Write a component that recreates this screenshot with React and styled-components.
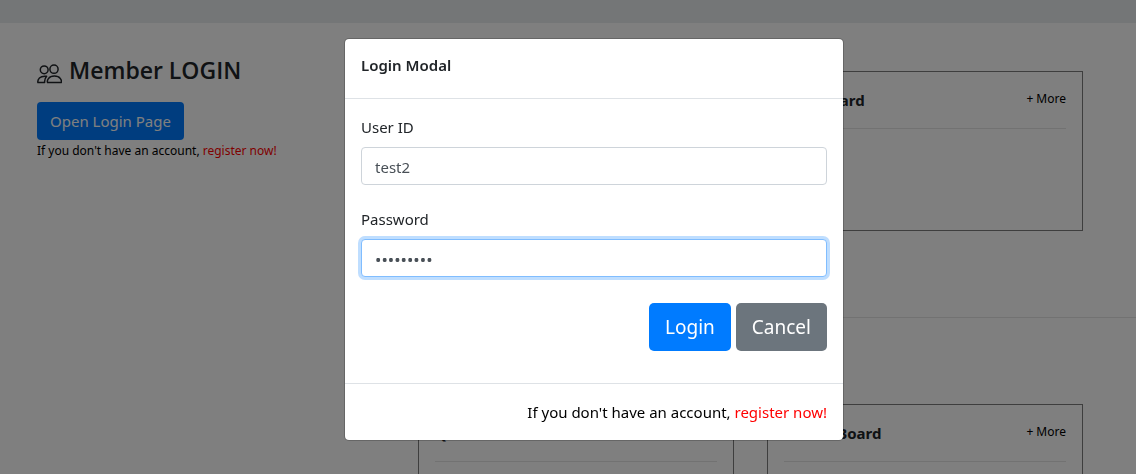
import React, { useState } from "react";
import styled, { createGlobalStyle } from "styled-components";

const GlobalStyle = createGlobalStyle`
  *, *::before, *::after { box-sizing: border-box; }
  body {
    margin: 0;
    overflow: hidden;
    background: #fff;
    color: #212529;
    font: 400 15px/24px "Noto Sans", "Open Sans", sans-serif;
  }
  button, input { font-family: inherit; margin: 0; }
`;

const TopBar = styled.header`
  height: 23px;
  background: #e9ecef;
`;

const Page = styled.main`
  display: flex;
`;

const Member = styled.aside`
  flex: 0 0 381px;
  margin-left: 37px;
  padding-top: 32px;
`;

const MemberTitle = styled.h4`
  display: flex;
  align-items: center;
  gap: 7px;
  margin: 0 0 17px;
  font-family: "Open Sans", sans-serif;
  font-size: 23px;
  line-height: 30px;
  font-weight: 600;
  svg { margin-top: 8px; }
`;

const Button = styled.button`
  border: 0;
  border-radius: ${(p) => (p.$large ? 5 : 4)}px;
  padding: ${(p) => (p.$large ? "0 16px" : "0 13px")};
  height: ${(p) => (p.$large ? 48 : 38)}px;
  font-size: ${(p) => (p.$large ? 19 : 15)}px;
  line-height: 24px;
  color: #fff;
  background: ${(p) => (p.$secondary ? "#6c757d" : "#007bff")};
`;

const Hint = styled.p`
  margin: 0;
  color: #000;
  font-size: ${(p) => (p.$small ? 12 : 15)}px;
  line-height: ${(p) => (p.$small ? 22 : 24)}px;
  a { color: #f00; text-decoration: none; }
`;

const Boards = styled.section`
  flex: 1;
  padding-top: 48px;
`;

const BoardRow = styled.div`
  display: grid;
  grid-template-columns: 1fr 1fr;
  gap: 33px;
  margin-right: 53px;
`;

const Rule = styled.hr`
  border: 0;
  border-top: 1px solid rgba(0, 0, 0, 0.1);
  margin: 86px 0;
`;

const Card = styled.article`
  height: 160px;
  padding: 16px 16px 0;
  border: 1px solid #7c7c7c;
`;

const CardHead = styled.div`
  display: flex;
  justify-content: space-between;
  height: 41px;
  border-bottom: 1px solid rgba(0, 0, 0, 0.1);
`;

const CardTitle = styled.h6`
  margin: 0;
  font-size: 15px;
  line-height: 24px;
  font-weight: 700;
`;

const More = styled.a`
  color: #000;
  font-size: 12px;
  line-height: 22px;
  text-decoration: none;
`;

const Backdrop = styled.div`
  position: fixed;
  inset: 0;
  display: flex;
  justify-content: center;
  align-items: flex-start;
  padding: 38px 0 0 52px;
  background: rgba(0, 0, 0, 0.5);
`;

const Dialog = styled.div`
  width: 100%;
  max-width: 500px;
  background: #fff;
  background-clip: padding-box;
  border: 1px solid rgba(0, 0, 0, 0.2);
  border-radius: 5px;
`;

const DialogHead = styled.div`
  padding: 14px 16px 21px;
  border-bottom: 1px solid #dee2e6;
`;

const DialogTitle = styled.h5`
  margin: 0;
  font-size: 15px;
  line-height: 24px;
  font-weight: 600;
`;

const DialogBody = styled.form`
  padding: 16px 16px 32px;
`;

const Field = styled.div`
  margin-bottom: ${(p) => (p.$last ? 26 : 22)}px;
`;

const Label = styled.label`
  display: block;
  margin-bottom: 8px;
`;

const Input = styled.input`
  display: block;
  width: 100%;
  height: 38px;
  padding: 2px 13px 0;
  border: 1px solid ${(p) => (p.$active ? "#80bdff" : "#ced4da")};
  border-radius: 4px;
  outline: 0;
  box-shadow: ${(p) => (p.$active ? "0 0 0 3px rgba(0, 123, 255, 0.25)" : "none")};
  color: #495057;
  background: #fff;
  font-size: ${(p) => (p.type === "password" ? 17 : 15)}px;
`;

const Actions = styled.div`
  display: flex;
  justify-content: flex-end;
  gap: 5px;
`;

const DialogFoot = styled.div`
  display: flex;
  justify-content: flex-end;
  padding: 16px;
  border-top: 1px solid #dee2e6;
`;

const PeopleIcon = () => (
  <svg width="25" height="20" viewBox="0 0 25 20" fill="none" stroke="currentColor" strokeWidth="1.5" aria-hidden="true">
    <circle cx="7.2" cy="5.8" r="3.9" />
    <circle cx="17" cy="5.2" r="4.1" />
    <path d="M10.6 18.6c-.8-2 .7-6.5 6.8-6.5s7.6 4.5 6.8 6.5z" strokeLinejoin="round" />
    <path d="M9.6 12.3c-7-.9-9.2 3.3-8.7 6.3h6.7c-.2-2.4.5-4.6 2-6.3z" strokeLinejoin="round" />
  </svg>
);

const Board = ({ title }) => (
  <Card>
    <CardHead>
      <CardTitle>{title}</CardTitle>
      <More href="#more">+ More</More>
    </CardHead>
  </Card>
);

const Register = ({ small }) => (
  <Hint $small={small}>
    If you don't have an account, <a href="#register">register now!</a>
  </Hint>
);

export default function App() {
  const [userId, setUserId] = useState("test2");
  const [password, setPassword] = useState("test12345");
  return (
    <>
      <GlobalStyle />
      <TopBar />
      <Page>
        <Member>
          <MemberTitle><PeopleIcon />Member LOGIN</MemberTitle>
          <Button type="button">Open Login Page</Button>
          <Register small />
        </Member>
        <Boards>
          <BoardRow>
            <Board title="Photo" />
            <Board title="Free Board" />
          </BoardRow>
          <Rule />
          <BoardRow>
            <Board title="Q&amp;A" />
            <Board title="Notice Board" />
          </BoardRow>
        </Boards>
      </Page>
      <Backdrop>
        <Dialog role="dialog" aria-modal="true" aria-labelledby="login-title">
          <DialogHead><DialogTitle id="login-title">Login Modal</DialogTitle></DialogHead>
          <DialogBody onSubmit={(e) => e.preventDefault()}>
            <Field>
              <Label htmlFor="user-id">User ID</Label>
              <Input id="user-id" type="text" value={userId} onChange={(e) => setUserId(e.target.value)} />
            </Field>
            <Field $last>
              <Label htmlFor="password">Password</Label>
              <Input id="password" type="password" $active value={password} onChange={(e) => setPassword(e.target.value)} />
            </Field>
            <Actions>
              <Button type="submit" $large>Login</Button>
              <Button type="button" $large $secondary>Cancel</Button>
            </Actions>
          </DialogBody>
          <DialogFoot><Register /></DialogFoot>
        </Dialog>
      </Backdrop>
    </>
  );
}
